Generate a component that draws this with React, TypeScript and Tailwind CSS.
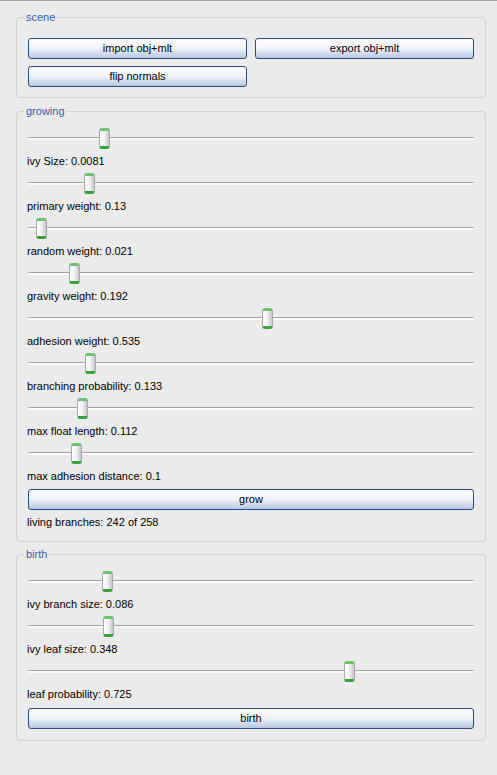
import React from 'react';

type SliderItem = { label: string; offset: number };

const growing: SliderItem[] = [
    { label: 'ivy Size: 0.0081', offset: 71 },
    { label: 'primary weight: 0.13', offset: 56 },
    { label: 'random weight: 0.021', offset: 8 },
    { label: 'gravity weight: 0.192', offset: 41 },
    { label: 'adhesion weight: 0.535', offset: 234 },
    { label: 'branching probability: 0.133', offset: 57 },
    { label: 'max float length: 0.112', offset: 49 },
    { label: 'max adhesion distance: 0.1', offset: 43 },
];

const birth: SliderItem[] = [
    { label: 'ivy branch size: 0.086', offset: 74 },
    { label: 'ivy leaf size: 0.348', offset: 75 },
    { label: 'leaf probability: 0.725', offset: 316 },
];

const XpButton = ({ children }: { children: React.ReactNode }) => (
    <button className="h-[21px] w-full rounded-[3px] border border-[#2b4c83] bg-gradient-to-b from-white via-[#eef2f9] to-[#b7c6e1] text-[11px] leading-none text-black">
        {children}
    </button>
);

const Slider = ({ item }: { item: SliderItem }) => (
    <div>
        <div className="relative h-[22px]">
            {/* groove */}
            <div className="absolute left-0 right-0 top-[10px] h-[3px] rounded-full border-t border-[#a3a29c] bg-[#fbfaf4]" />
            {/* thumb */}
            <div
                className="absolute top-[1px] h-[21px] w-[11px] rounded-[3px] border-x border-[#a8a8a8] border-t-[3px] border-t-[#6cc56c] border-b-[3px] border-b-[#3aa23a] bg-gradient-to-r from-white via-[#f1f1f1] to-[#c4c6cc]"
                style={{ left: item.offset }}
            />
        </div>
        <div className="-ml-[1px] flex h-[23px] items-center pt-[2px]">{item.label}</div>
    </div>
);

const Group = ({ title, className, children }: { title: string; className?: string; children: React.ReactNode }) => (
    <fieldset className={`rounded-[4px] border border-[#d3d1cc] px-[11px] ${className ?? ''}`}>
        <legend className="-ml-[4px] px-[2px] leading-[14px] text-[#2f5fb0]">{title}</legend>
        {children}
    </fieldset>
);

export default function App() {
    return (
        <div
            className="h-[775px] w-[497px] overflow-hidden border-t border-[#a5a4a8] bg-[#ecebeb] pl-4 pr-[11px] pt-[9px] text-[11px] text-black"
            style={{ fontFamily: '"Liberation Sans", Arial, sans-serif' }}
        >
            <Group title="scene" className="pt-[14px] pb-[10px]">
                <div className="grid grid-cols-2 gap-x-[8px] gap-y-[7px]">
                    <XpButton>import obj+mlt</XpButton>
                    <XpButton>export obj+mlt</XpButton>
                    <XpButton>flip normals</XpButton>
                </div>
            </Group>

            <Group title="growing" className="mt-[6px] pt-[9px] pb-[7px]">
                {growing.map((s) => (
                    <Slider key={s.label} item={s} />
                ))}
                <div className="mt-[2px]">
                    <XpButton>grow</XpButton>
                </div>
                <div className="-ml-[1px] mt-[1px] flex h-[23px] items-center">living branches: 242 of 258</div>
            </Group>

            <Group title="birth" className="mt-[5px] pt-[9px] pb-[11px]">
                {birth.map((s) => (
                    <Slider key={s.label} item={s} />
                ))}
                <div className="mt-[3px]">
                    <XpButton>birth</XpButton>
                </div>
            </Group>
        </div>
    );
}
